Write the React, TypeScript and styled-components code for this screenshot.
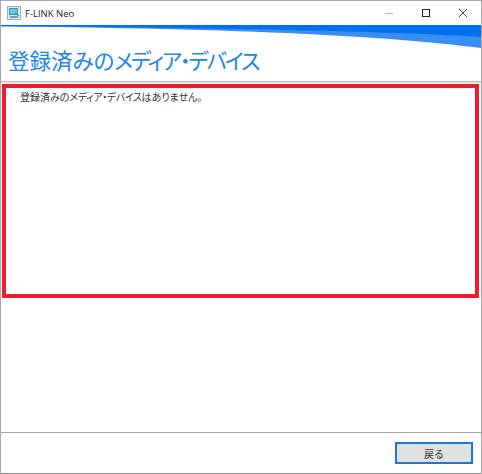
import React from "react";
import styled, { createGlobalStyle } from "styled-components";

const Global = createGlobalStyle`
  html, body { margin: 0; padding: 0; background: #fff; }
  * { box-sizing: border-box; }
`;
const Win = styled.div`
  width: 482px; height: 474px; display: flex; flex-direction: column;
  border: 1px solid #a9a9a9; border-bottom-color: #8c8c8c; background: #fff; overflow: hidden;
  font-family: "Noto Sans CJK JP", "Liberation Sans", sans-serif;
  font-feature-settings: "palt";
`;
const TitleBar = styled.div`
  height: 24px; flex: none; display: flex; align-items: center; padding-left: 6px;
`;
const AppName = styled.span`
  margin-left: 4px; font: 9.5px "Open Sans", "Liberation Sans", sans-serif; color: #222; flex: 1;
`;
const WinControls = styled.div`display: flex; height: 100%;`;
const WinBtn = styled.div`
  width: 37px; display: flex; align-items: center; justify-content: center;
`;
const Swoosh = styled.svg`display: block; flex: none; width: 480px; height: 25px;`;
const Title = styled.h1`
  margin: 0; height: 31px; flex: none; padding: 0 0 0 7px; font-size: 21.5px; line-height: 19px; font-weight: 400;
  color: #1a86ef; white-space: nowrap;
`;
const Kana = styled.span<{ $tight: number }>`
  letter-spacing: ${(p) => p.$tight}px;
`;
const Rule = styled.div`height: 2px; flex: none; background: #c4c4c4; border-bottom: 1px solid #dedede;`;
const Highlight = styled.section`
  flex: none; margin: 1px 2px 0 1px; height: 214px; border: 4px solid #f01c2e; padding: 1px 0 0 14px;
  font-size: 10px; line-height: 15px; color: #333;
`;
const Spacer = styled.div`flex: 1;`;
const Footer = styled.footer`
  height: 41px; flex: none; border-top: 1px solid #a5a5a5; display: flex; align-items: flex-start;
  justify-content: flex-end; padding: 9px 8px 0 0;
`;
const BackButton = styled.button`
  width: 78px; height: 22px; border: 2px solid #1a78d6; background: #e1e1e1; padding: 0;
  font: 10px "Noto Sans CJK JP", sans-serif; color: #333;
`;

function AppIcon() {
  return (
    <svg width="14" height="14" viewBox="0 0 14 14">
      <rect x="0.5" y="0.5" width="13" height="13" fill="#dcebf5" stroke="#8fb0c6" />
      <rect x="2.5" y="2.5" width="8" height="6" fill="#6cc9e0" stroke="#3f8fae" />
      <path d="M3 11h8" stroke="#5c8fae" strokeWidth="1.6" />
      <path d="M8 7l4 3" stroke="#3c9a7e" strokeWidth="1.5" />
    </svg>
  );
}

export default function App() {
  return (
    <Win>
      <Global />
      <TitleBar>
        <AppIcon />
        <AppName>F-LINK Neo</AppName>
        <WinControls>
          <WinBtn>
            <svg width="10" height="10" viewBox="0 0 10 10"><path d="M1 5.5h8" stroke="#b5b5b5" /></svg>
          </WinBtn>
          <WinBtn>
            <svg width="10" height="10" viewBox="0 0 10 10"><rect x="1.5" y="1.5" width="7" height="7" fill="none" stroke="#222" /></svg>
          </WinBtn>
          <WinBtn>
            <svg width="10" height="10" viewBox="0 0 10 10"><path d="M1 1l8 8M9 1l-8 8" stroke="#444" /></svg>
          </WinBtn>
        </WinControls>
      </TitleBar>
      <Swoosh viewBox="0 0 480 25" preserveAspectRatio="none">
        <path d="M0 0H480V23C400 13 280 4 0 1.5Z" fill="#3a8df5" />
        <path d="M0 0H480V12C400 7 250 3 0 1Z" fill="#0070ee" />
      </Swoosh>
      <Title>登録済みの<Kana $tight={-2.1}>メディア・デバイス</Kana></Title>
      <Rule />
      <Highlight>登録済みの<Kana $tight={-0.4}>メディア・デバイス</Kana>はありません。</Highlight>
      <Spacer />
      <Footer>
        <BackButton>戻る</BackButton>
      </Footer>
    </Win>
  );
}
